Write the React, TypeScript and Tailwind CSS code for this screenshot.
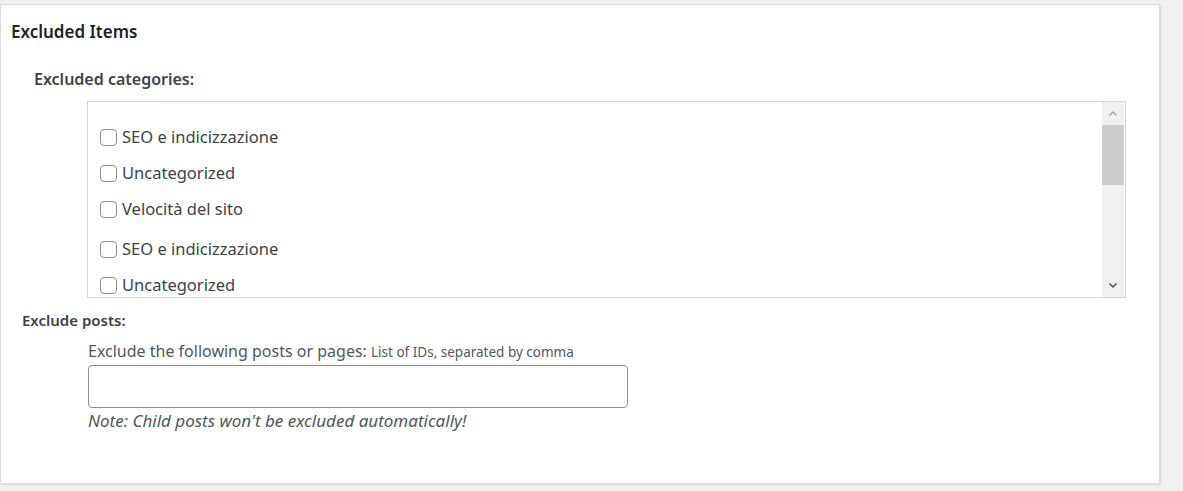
import React from "react";

const items = [
  "SEO e indicizzazione",
  "Uncategorized",
  "Velocità del sito",
  "SEO e indicizzazione",
  "Uncategorized",
];

function Box() {
  return (
    <span className="inline-block w-[17px] h-[17px] rounded-[4px] border border-[#8c8f94] bg-white shrink-0" />
  );
}

export default function App() {
  return (
    <div
      className="w-[1183px] h-[491px] bg-[#f0f0f1] pt-[4px] text-[#3c434a] overflow-hidden"
      style={{ fontFamily: '"Noto Sans", "Open Sans", sans-serif' }}
    >
      <div className="w-[1160px] h-[480px] bg-white border border-[#dcdcde] shadow-[1px_1px_1px_rgba(0,0,0,0.08)] pl-[10px] pt-[15px]">
        <h2 className="text-[17px] font-semibold text-[#1d2327] leading-[24px]">Excluded Items</h2>
        <div className="pl-[23px] mt-[24px]">
          <div className="text-[16px] font-semibold text-[#3c434a] leading-[22px]">Excluded categories:</div>
          <div className="ml-[53px] mt-[11px] w-[1039px] h-[197px] border border-[#c3d9ec] flex">
            <div className="flex-1 overflow-hidden pl-[12px] pt-[24px]">
              {items.map((t, i) => (
                <div
                  key={i}
                  className={`flex items-center gap-[5px] h-[22px] ${i === 0 ? "" : i === 3 ? "mt-[18px]" : "mt-[14px]"}`}
                >
                  <Box />
                  <span className="text-[16.5px] leading-[22px] text-[#3c434a]">{t}</span>
                </div>
              ))}
            </div>
            <div className="w-[22px] bg-[#f0f0f0] flex flex-col items-center relative mr-[1px]">
              <div className="h-[23px] flex items-center justify-center">
                <svg width="8" height="5" viewBox="0 0 8 5"><path d="M0.5 4.5 L4 1 L7.5 4.5" fill="none" stroke="#a3a3a3" strokeWidth="1.3" /></svg>
              </div>
              <div className="w-full h-[60px] bg-[#cdcdcd]" />
              <div className="flex-1" />
              <div className="h-[23px] flex items-center justify-center">
                <svg width="8" height="5" viewBox="0 0 8 5"><path d="M0.5 0.5 L4 4 L7.5 0.5" fill="none" stroke="#505050" strokeWidth="1.5" /></svg>
              </div>
            </div>
          </div>
        </div>
        <div className="pl-[11px] mt-[11px]">
          <div className="text-[15px] font-semibold leading-[22px] text-[#3c434a]">Exclude posts:</div>
          <div className="pl-[66px] mt-[9px]">
            <div className="text-[16px] leading-[22px] text-[#50575e]">
              Exclude the following posts or pages: <span className="text-[13.5px]">List of IDs, separated by comma</span>
            </div>
            <div className="w-[540px] h-[43px] border border-[#8c8f94] rounded-[4px] mt-[2px]" />
            <div className="text-[17px] italic leading-[22px] text-[#50575e] mt-[2px]">
              Note: Child posts won't be excluded automatically!
            </div>
          </div>
        </div>
      </div>
    </div>
  );
}
